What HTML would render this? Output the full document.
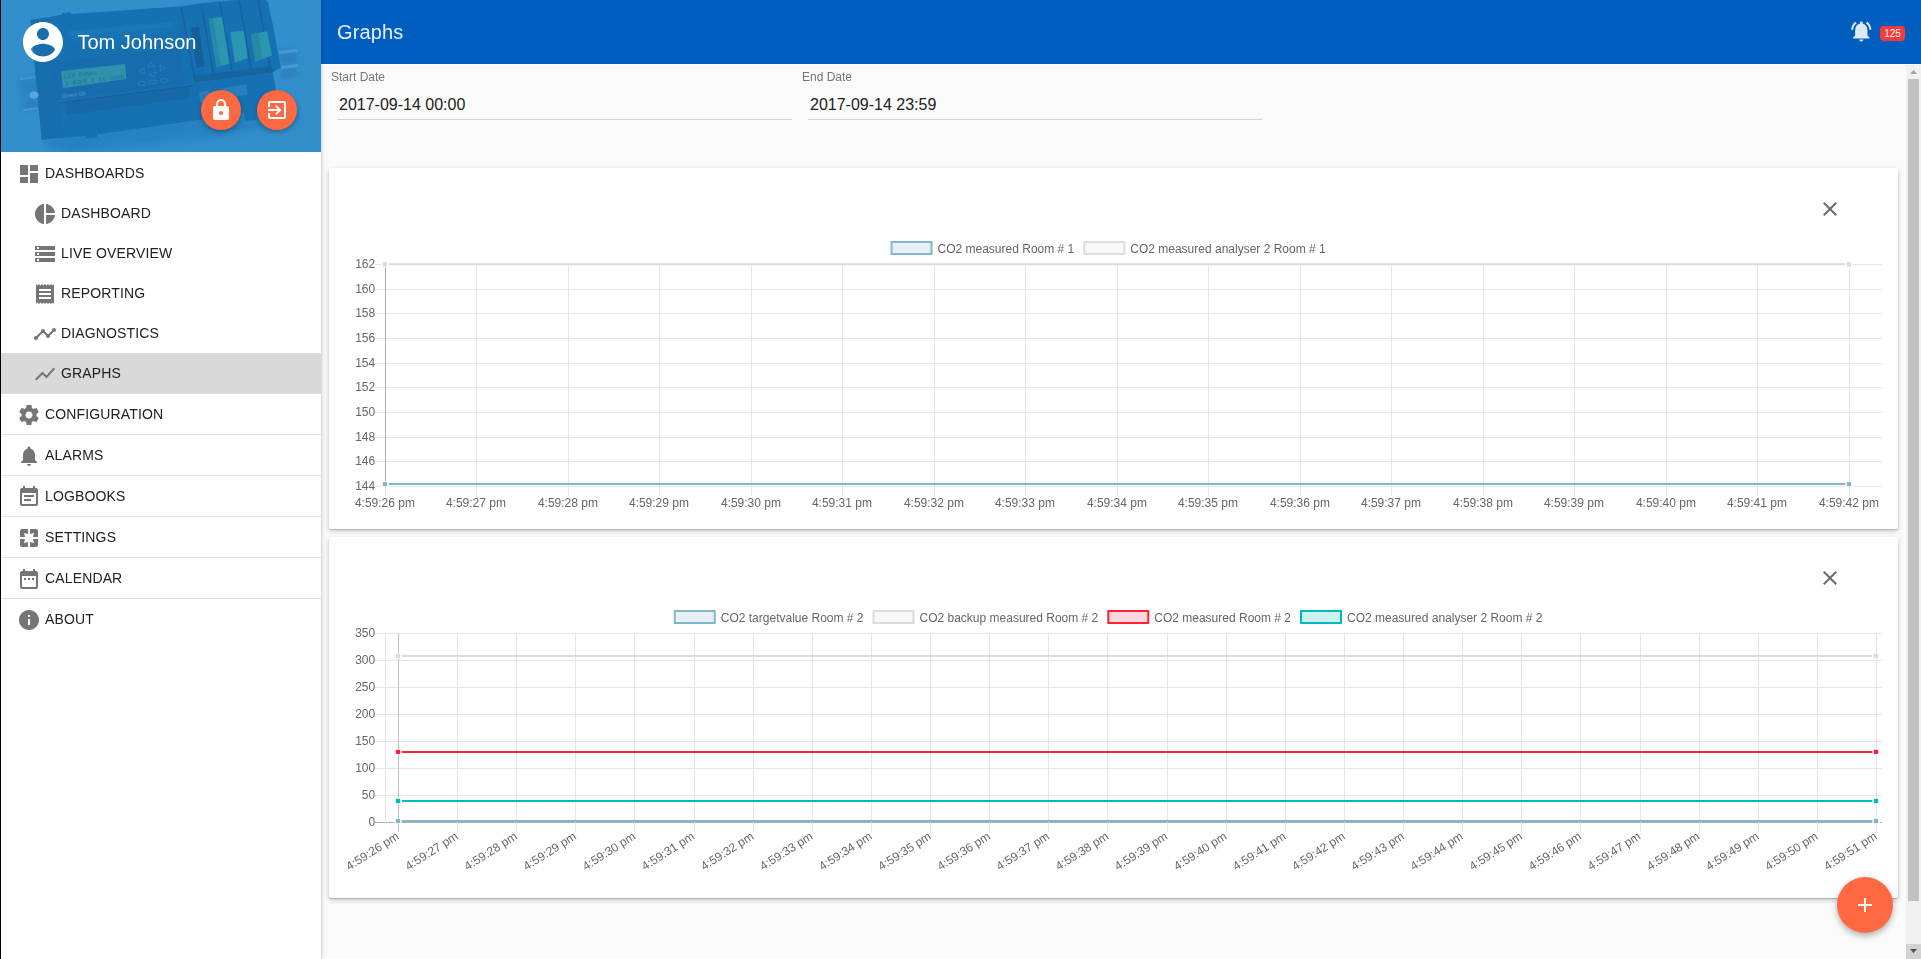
<!DOCTYPE html>
<html lang="en"><head><meta charset="utf-8"><title>Graphs</title>
<style>
*{box-sizing:border-box;margin:0;padding:0}
html,body{width:1921px;height:959px;overflow:hidden;background:#fafafa;font-family:"Liberation Sans",Arial,sans-serif;}
#strip{position:absolute;left:0;top:0;width:1px;height:959px;background:#000;z-index:50}
#side{position:absolute;left:1px;top:0;width:320px;height:959px;background:#fff;z-index:10;box-shadow:0 1px 5px 0 rgba(0,0,0,.2),0 2px 2px 0 rgba(0,0,0,.14),0 3px 1px -2px rgba(0,0,0,.12)}
#hdr{position:absolute;left:0;top:0;width:320px;height:152px;background:#338fcb;overflow:hidden}
#hdr svg.bg{position:absolute;left:0;top:0}
#avatar{position:absolute;left:18px;top:18px}
#uname{position:absolute;left:76.500px;top:30px;color:#fff;font-size:20px;line-height:24px;white-space:nowrap}
.fab{position:absolute;border-radius:50%;background:#ff6840;box-shadow:0 2px 5px rgba(0,0,0,.3)}
.fab svg{position:absolute}
.mi{position:absolute;left:0;width:320px;height:40px;font-size:14px;line-height:40px;color:#212121;white-space:nowrap;letter-spacing:0.14px}
.mi .ic{position:absolute;top:9px}
.mi span{position:absolute;top:0}
.mi.top .ic{left:16px} .mi.top span{left:44px}
.mi.sub .ic{left:32px} .mi.sub span{left:60px}
.mi.sel{background:#d9d9d9}
.sep{position:absolute;left:0;width:320px;height:1px;background:#e0e0e0}
#tb{position:absolute;left:321px;top:0;width:1600px;height:64px;background:#005fbe;z-index:5}
#tb h1{position:absolute;left:16px;top:18px;letter-spacing:0.12px;font-size:20px;font-weight:400;line-height:28px;color:#e8f0fa}
#bell{position:absolute;left:1527.900px;top:19.440px}
#badge{position:absolute;left:1559px;top:26px;width:25px;height:15px;border-radius:4px;background:#f93a3a;color:#fff;font-size:10px;line-height:15px;text-align:center;letter-spacing:0}
.lbl{position:absolute;top:70px;font-size:12px;line-height:14px;color:#757575}
.val{position:absolute;top:96px;font-size:16px;line-height:18px;color:#212121}
.ul{position:absolute;top:119px;height:1px;background:#d4d4d4}
.card{position:absolute;left:329px;width:1569px;height:361px;background:#fff;border-radius:2px;box-shadow:0 2px 5px 0 rgba(0,0,0,.22),0 1px 1px 0 rgba(0,0,0,.16)}
.card svg.ch{position:absolute;left:0;top:0}
.card .ic{position:absolute;left:1489px;top:29px}
#sb{position:absolute;left:1906px;top:64px;width:15px;height:895px;background:#f1f1f1}
#sb .th{position:absolute;left:2px;top:15px;width:11px;height:822px;background:#c1c1c1}
#sb .up,#sb .dn{position:absolute;left:0;width:15px;height:15px}
#sb .dn{bottom:0;background:#d2d2d2}
#side,#tb h1,.card,.lbl{will-change:transform}
svg text{font-family:"Liberation Sans",Arial,sans-serif}
svg text.mono{font-family:"Liberation Mono",monospace}
</style></head>
<body>
<div id="strip"></div>
<div id="side">
<div id="hdr"><svg class="bg" width="320" height="152" viewBox="1 0 320 152"><defs><filter id="b1" x="-10%" y="-10%" width="120%" height="120%"><feGaussianBlur stdDeviation="0.7"/></filter><filter id="b2" x="-30%" y="-30%" width="160%" height="160%"><feGaussianBlur stdDeviation="2.5"/></filter><filter id="b3" x="-30%" y="-60%" width="160%" height="220%"><feGaussianBlur stdDeviation="5"/></filter></defs><path d="M44 143 L150 128 L250 114 L292 108 L300 122 L210 138 L70 154 Z" fill="#2782c2" filter="url(#b3)"/><path d="M44 140 L200 119 L262 110 L264 118 L200 128 L50 147 Z" fill="#2580c0" filter="url(#b2)"/><path d="M17 77 L40 74 L44 110 L21 112 Z" fill="#2c87c6" filter="url(#b2)"/><path d="M22 84 L40 81 L41 90 L23 92 Z" fill="#2a80be" filter="url(#b2)"/><path d="M24 101 L42 99 L43 107 L25 109 Z" fill="#2a80be" filter="url(#b2)"/><path d="M20 78 L38 75.500 L38 77.500 L20 80 Z" fill="#4596cf" filter="url(#b1)"/><path d="M23 109 L42 107 L42 109 L23 111 Z" fill="#4596cf" filter="url(#b1)"/><path d="M277 48 L296 46 L298 77 L281 79 Z" fill="#2d88c6" filter="url(#b2)"/><path d="M279 51 L297 49 L297 52 L279 54 Z" fill="#4a9bd2" filter="url(#b1)"/><path d="M280 57 L297 55 L297 61 L281 63 Z" fill="#2a7fbb" filter="url(#b2)"/><path d="M281 66 L298 64 L298 67 L282 69 Z" fill="#4a9bd2" filter="url(#b1)"/><path d="M282 72 L298 70 L298 75 L282 77 Z" fill="#2a7fbb" filter="url(#b2)"/><g filter="url(#b1)"><path d="M30.5 20 L50 17 L62 14.500 L62 13 L71 12.200 L71 13.900 L179.600 6.400 L200 3.500 L218 1.500 L237 0 L266 0 L268 2 L272.700 24 L280.800 67.400 L272.700 72.500 L276 90 L277 108 L256.700 111 L256.700 120 L245.500 121 L243.800 112.500 L200 119.700 L97 134.500 L97 137.500 L85 139 L85 136 L41.800 139.800 Z" fill="#1771b2"/><path d="M30.500 20 L48 17.700 L64 136.500 L41.800 139.800 Z" fill="#166ead"/><path d="M50 17 L179.600 6.400 L180.500 12 L52 23 Z" fill="#1971b3"/><path d="M66 30 L178 20 L179 32 L68 43 Z" fill="#1973b4"/><path d="M70 31.500 L172 22.500 L172.500 27 L70.500 36 Z" fill="#1f78b8"/><path d="M50 62 L180 48 L184 84 L56 100 Z" fill="#156cac"/><path d="M64 104 L188 88 L190 98 L66 115 Z" fill="#1768a6"/><path d="M60 102 L192 85 L192.300 87 L60.300 104 Z" fill="#12639f"/><path d="M180.4 8 L182.20000000000002 8 L195.8 80 L194 80 Z" fill="#12639f"/><path d="M200.5 4.8 L202.3 4.8 L215.10000000000002 78.6 L213.3 78.6 Z" fill="#12639f"/><path d="M219 2.4 L220.8 2.4 L233.60000000000002 75.4 L231.8 75.4 Z" fill="#12639f"/><path d="M238.2 0.8 L240.0 0.8 L252.8 73 L251 73 Z" fill="#12639f"/><path d="M257.5 0 L259.3 0 L271.3 70.6 L269.5 70.6 Z" fill="#12639f"/><path d="M193 76 L272 66 L273 72.500 L194 82.500 Z" fill="#13659f"/><path d="M190.900 28 L199 27 L204.500 66.500 L196.500 68 Z" fill="#125f9b"/><path d="M199 92 L209 90.500 L210.500 101 L200.500 102.500 Z" fill="#2a7fba"/><path d="M222 88 L246 84.500 L247.500 95 L223.500 98.500 Z" fill="#2a7fba"/></g><path d="M61 71 L125 64 L126.500 79 L63 88 Z" fill="#2d92ab" filter="url(#b1)"/><g fill="#226f99" font-family="Liberation Mono, monospace" font-size="6.200" transform="translate(64.500,78.500) rotate(-6.500)" filter="url(#b1)"><text class="mono" x="0" y="0">LCD PANEL</text><text class="mono" x="0" y="7.300">2 ROWS X 16 CHAR</text></g><g fill="none" stroke="#2d83bf" stroke-width="0.800" filter="url(#b1)"><path d="M144 68 L139 71 L144.500 74 Z"/><path d="M151 62 L147.500 67 L155 66.500 Z"/><path d="M149.500 73.500 L156.500 72.500 L153.500 77.500 Z"/><path d="M160 65 L165.500 68 L160.500 71.500 Z"/><ellipse cx="142" cy="83.500" rx="4" ry="2"/><ellipse cx="153" cy="82" rx="4" ry="2"/><ellipse cx="164" cy="80.500" rx="4" ry="2"/></g><g filter="url(#b1)"><path d="M208.500 18.500 L222 16.900 L229.400 63.400 L216.500 67.400 Z" fill="#2a96b0"/><path d="M230.200 32.100 L243.800 30.500 L247.800 58.600 L235 62.600 Z" fill="#2a96b0"/><path d="M251 34.500 L267 31.300 L272 55.400 L255 61.800 Z" fill="#2a96b0"/><path d="M208.500 18.500 L213 18 L221 66 L216.500 67.400 Z" fill="#2589a6"/><path d="M251 34.500 L258 33 L262.500 59 L255 61.800 Z" fill="#2589a6"/></g><ellipse cx="34" cy="95" rx="4.500" ry="3.500" fill="#5ea6d6" filter="url(#b1)"/><text x="62" y="98" font-size="6" fill="#5a9fd0" transform="rotate(-6.500 62 98)" filter="url(#b1)" font-family="Liberation Sans,sans-serif">Direct 06</text></svg>
<div id="avatar"><svg class="ic" width="48" height="48" viewBox="0 0 24 24" style=""><path fill="#fff" d="M12 2C6.48 2 2 6.48 2 12s4.48 10 10 10 10-4.48 10-10S17.52 2 12 2zm0 3c1.66 0 3 1.34 3 3s-1.34 3-3 3-3-1.34-3-3 1.34-3 3-3zm0 14.2c-2.5 0-4.71-1.28-6-3.22.03-1.99 4-3.08 6-3.08 1.99 0 5.97 1.09 6 3.08-1.29 1.94-3.5 3.22-6 3.22z"/></svg></div>
<div id="uname">Tom Johnson</div>
<div class="fab" style="left:200px;top:90px;width:40px;height:40px"><svg class="ic" width="24" height="24" viewBox="0 0 24 24" style="left:8px;top:8px"><path fill="#fff" d="M18 8h-1V6c0-2.76-2.24-5-5-5S7 3.24 7 6v2H6c-1.1 0-2 .9-2 2v10c0 1.1.9 2 2 2h12c1.1 0 2-.9 2-2V10c0-1.1-.9-2-2-2zm-6 9c-1.1 0-2-.9-2-2s.9-2 2-2 2 .9 2 2-.9 2-2 2zm3.1-9H8.9V6c0-1.71 1.39-3.1 3.1-3.1 1.71 0 3.1 1.39 3.1 3.1v2z"/></svg></div>
<div class="fab" style="left:256px;top:90px;width:40px;height:40px"><svg class="ic" width="24" height="24" viewBox="0 0 24 24" style="left:8px;top:8px"><path fill="#fff" d="M10.09 15.59L11.5 17l5-5-5-5-1.41 1.41L12.67 11H3v2h9.67l-2.58 2.59zM19 3H5c-1.11 0-2 .9-2 2v4h2V5h14v14H5v-4H3v4c0 1.1.89 2 2 2h14c1.1 0 2-.9 2-2V5c0-1.1-.9-2-2-2z"/></svg></div>
</div>
<div class="mi top" style="top:153px"><svg class="ic" width="24" height="24" viewBox="0 0 24 24" style=""><path fill="#757575" d="M3 13h8V3H3v10zm0 8h8v-6H3v6zm10 0h8V11h-8v10zm0-18v6h8V3h-8z"/></svg><span>DASHBOARDS</span></div>
<div class="mi sub" style="top:193px"><svg class="ic" width="24" height="24" viewBox="0 0 24 24" style=""><path fill="#757575" d="M11 2v20c-5.07-.5-9-4.79-9-10s3.93-9.5 9-10zm2.03 0v8.99H22c-.47-4.74-4.24-8.52-8.97-8.99zm0 11.01V22c4.74-.47 8.5-4.25 8.97-8.99h-8.97z"/></svg><span>DASHBOARD</span></div>
<div class="mi sub" style="top:233px"><svg class="ic" width="24" height="24" viewBox="0 0 24 24" style=""><path fill="#757575" d="M2 20h20v-4H2v4zm2-3h2v2H4v-2zM2 4v4h20V4H2zm4 3H4V5h2v2zm-4 7h20v-4H2v4zm2-3h2v2H4v-2z"/></svg><span>LIVE OVERVIEW</span></div>
<div class="mi sub" style="top:273px"><svg class="ic" width="24" height="24" viewBox="0 0 24 24" style=""><path fill="#757575" d="M18 17H6v-2h12v2zm0-4H6v-2h12v2zm0-4H6V7h12v2zM3 22l1.5-1.5L6 22l1.5-1.5L9 22l1.5-1.5L12 22l1.5-1.5L15 22l1.5-1.5L18 22l1.5-1.5L21 22V2l-1.5 1.5L18 2l-1.5 1.5L15 2l-1.5 1.5L12 2l-1.5 1.5L9 2 7.5 3.5 6 2 4.5 3.5 3 2v20z"/></svg><span>REPORTING</span></div>
<div class="mi sub" style="top:313px"><svg class="ic" width="24" height="24" viewBox="0 0 24 24" style=""><path fill="#757575" d="M23 8c0 1.1-.9 2-2 2-.18 0-.35-.02-.51-.07l-3.56 3.55c.05.16.07.34.07.52 0 1.1-.9 2-2 2s-2-.9-2-2c0-.18.02-.36.07-.52l-2.55-2.55c-.16.05-.34.07-.52.07s-.36-.02-.52-.07l-4.55 4.56c.05.16.07.33.07.51 0 1.1-.9 2-2 2s-2-.9-2-2 .9-2 2-2c.18 0 .35.02.51.07l4.56-4.55C8.02 9.36 8 9.18 8 9c0-1.1.9-2 2-2s2 .9 2 2c0 .18-.02.36-.07.52l2.55 2.55c.16-.05.34-.07.52-.07s.36.02.52.07l3.55-3.56C19.02 8.35 19 8.18 19 8c0-1.1.9-2 2-2s2 .9 2 2z"/></svg><span>DIAGNOSTICS</span></div>
<div class="mi sub sel" style="top:353px"><svg class="ic" width="24" height="24" viewBox="0 0 24 24" style=""><path fill="#757575" d="M3.5 18.49l6-6.01 4 4L22 6.92l-1.41-1.41-7.09 7.97-4-4L2 16.99z"/></svg><span>GRAPHS</span></div>
<div class="sep" style="top:393px"></div>
<div class="mi top" style="top:394px"><svg class="ic" width="24" height="24" viewBox="0 0 24 24" style=""><path fill="#757575" d="M19.43 12.98c.04-.32.07-.64.07-.98s-.03-.66-.07-.98l2.11-1.65c.19-.15.24-.42.12-.64l-2-3.46c-.12-.22-.39-.3-.61-.22l-2.49 1c-.52-.4-1.08-.73-1.69-.98l-.38-2.65C14.46 2.18 14.25 2 14 2h-4c-.25 0-.46.18-.49.42l-.38 2.65c-.61.25-1.17.59-1.69.98l-2.49-1c-.23-.09-.49 0-.61.22l-2 3.46c-.13.22-.07.49.12.64l2.11 1.65c-.04.32-.07.65-.07.98s.03.66.07.98l-2.11 1.65c-.19.15-.24.42-.12.64l2 3.46c.12.22.39.3.61.22l2.49-1c.52.4 1.08.73 1.69.98l.38 2.65c.03.24.24.42.49.42h4c.25 0 .46-.18.49-.42l.38-2.65c.61-.25 1.17-.59 1.69-.98l2.49 1c.23.09.49 0 .61-.22l2-3.46c.12-.22.07-.49-.12-.64l-2.11-1.65zM12 15.5c-1.93 0-3.5-1.57-3.5-3.5s1.57-3.5 3.5-3.5 3.5 1.57 3.5 3.5-1.57 3.5-3.5 3.5z"/></svg><span>CONFIGURATION</span></div>
<div class="sep" style="top:434px"></div>
<div class="mi top" style="top:435px"><svg class="ic" width="24" height="24" viewBox="0 0 24 24" style=""><path fill="#757575" d="M12 22c1.1 0 2-.9 2-2h-4c0 1.1.89 2 2 2zm6-6v-5c0-3.07-1.64-5.64-4.5-6.32V4c0-.83-.67-1.5-1.5-1.5s-1.5.67-1.5 1.5v.68C7.63 5.36 6 7.92 6 11v5l-2 2v1h16v-1l-2-2z"/></svg><span>ALARMS</span></div>
<div class="sep" style="top:475px"></div>
<div class="mi top" style="top:476px"><svg class="ic" width="24" height="24" viewBox="0 0 24 24" style=""><path fill="#757575" d="M17 10H7v2h10v-2zm2-7h-1V1h-2v2H8V1H6v2H5c-1.11 0-1.99.9-1.99 2L3 19c0 1.1.89 2 2 2h14c1.1 0 2-.9 2-2V5c0-1.1-.9-2-2-2zm0 16H5V8h14v11zm-5-5H7v2h7v-2z"/></svg><span>LOGBOOKS</span></div>
<div class="sep" style="top:516px"></div>
<div class="mi top" style="top:517px"><svg class="ic" width="24" height="24" viewBox="0 0 24 24" style=""><path fill="#757575" d="M3 5v6h5L7 7l4 1V3H5c-1.1 0-2 .9-2 2zm5 8H3v6c0 1.1.9 2 2 2h6v-5l-4 1 1-4zm9 4l-4-1v5h6c1.1 0 2-.9 2-2v-6h-5l1 4zm2-14h-6v5l4-1-1 4h5V5c0-1.1-.9-2-2-2z"/></svg><span>SETTINGS</span></div>
<div class="sep" style="top:557px"></div>
<div class="mi top" style="top:558px"><svg class="ic" width="24" height="24" viewBox="0 0 24 24" style=""><path fill="#757575" d="M9 11H7v2h2v-2zm4 0h-2v2h2v-2zm4 0h-2v2h2v-2zm2-7h-1V2h-2v2H8V2H6v2H5c-1.11 0-1.99.9-1.99 2L3 20c0 1.1.89 2 2 2h14c1.1 0 2-.9 2-2V6c0-1.1-.9-2-2-2zm0 16H5V9h14v11z"/></svg><span>CALENDAR</span></div>
<div class="sep" style="top:598px"></div>
<div class="mi top" style="top:599px"><svg class="ic" width="24" height="24" viewBox="0 0 24 24" style=""><path fill="#757575" d="M12 2C6.48 2 2 6.48 2 12s4.48 10 10 10 10-4.48 10-10S17.52 2 12 2zm1 15h-2v-6h2v6zm0-8h-2V7h2v2z"/></svg><span>ABOUT</span></div>
</div>
<div id="tb"><h1>Graphs</h1>
<div id="bell"><svg class="ic" width="24.6" height="24.6" viewBox="0 0 24 24" style=""><path fill="#dbe8f6" d="M7.58 4.08L6.15 2.65C3.75 4.48 2.17 7.3 2.03 10.5h2c.15-2.650 1.51-4.97 3.55-6.42zm12.39 6.42h2c-.15-3.2-1.73-6.02-4.12-7.85l-1.42 1.430c2.02 1.45 3.39 3.77 3.54 6.42zM18 11c0-3.07-1.64-5.64-4.5-6.32V4c0-.83-.67-1.5-1.5-1.5s-1.5.67-1.5 1.5v.68C7.63 5.36 6 7.92 6 11v5l-2 2v1h16v-1l-2-2v-5zm-6 11c.14 0 .27-.01.4-.04.65-.14 1.18-.58 1.44-1.180.1-.24.15-.5.15-.78h-4c.01 1.1.9 2 2.010 2z"/></svg></div>
<div id="badge">125</div>
</div>
<div class="lbl" style="left:331px">Start Date</div>
<div class="val" style="left:339px">2017-09-14 00:00</div>
<div class="ul" style="left:337px;width:455px"></div>
<div class="lbl" style="left:802px">End Date</div>
<div class="val" style="left:810px">2017-09-14 23:59</div>
<div class="ul" style="left:808px;width:454px"></div>
<div class="card" style="top:168px"><svg class="ch" width="1569" height="361" viewBox="0 0 1569 361"><line x1="46" x2="1553" y1="96.5" y2="96.5" stroke="#e6e6e6" stroke-width="1"/><text x="46.19999999999999" y="100.10" font-size="12" fill="#666" text-anchor="end">162</text><line x1="46" x2="1553" y1="121.5" y2="121.5" stroke="#e6e6e6" stroke-width="1"/><text x="46.19999999999999" y="124.77" font-size="12" fill="#666" text-anchor="end">160</text><line x1="46" x2="1553" y1="145.5" y2="145.5" stroke="#e6e6e6" stroke-width="1"/><text x="46.19999999999999" y="149.43" font-size="12" fill="#666" text-anchor="end">158</text><line x1="46" x2="1553" y1="170.5" y2="170.5" stroke="#e6e6e6" stroke-width="1"/><text x="46.19999999999999" y="174.10" font-size="12" fill="#666" text-anchor="end">156</text><line x1="46" x2="1553" y1="195.5" y2="195.5" stroke="#e6e6e6" stroke-width="1"/><text x="46.19999999999999" y="198.77" font-size="12" fill="#666" text-anchor="end">154</text><line x1="46" x2="1553" y1="219.5" y2="219.5" stroke="#e6e6e6" stroke-width="1"/><text x="46.19999999999999" y="223.43" font-size="12" fill="#666" text-anchor="end">152</text><line x1="46" x2="1553" y1="244.5" y2="244.5" stroke="#e6e6e6" stroke-width="1"/><text x="46.19999999999999" y="248.10" font-size="12" fill="#666" text-anchor="end">150</text><line x1="46" x2="1553" y1="269.5" y2="269.5" stroke="#e6e6e6" stroke-width="1"/><text x="46.19999999999999" y="272.77" font-size="12" fill="#666" text-anchor="end">148</text><line x1="46" x2="1553" y1="293.5" y2="293.5" stroke="#e6e6e6" stroke-width="1"/><text x="46.19999999999999" y="297.43" font-size="12" fill="#666" text-anchor="end">146</text><line x1="46" x2="1553" y1="318.5" y2="318.5" stroke="#e6e6e6" stroke-width="1"/><text x="46.19999999999999" y="322.10" font-size="12" fill="#666" text-anchor="end">144</text><line x1="56.5" x2="56.5" y1="96.0" y2="319.0" stroke="#acacac" stroke-width="1"/><line x1="56.5" x2="56.5" y1="319.0" y2="328.0" stroke="#e6e6e6" stroke-width="1"/><text x="55.90" y="339" font-size="12" fill="#666" text-anchor="middle">4:59:26 pm</text><line x1="147.5" x2="147.5" y1="96.0" y2="328.0" stroke="#e6e6e6" stroke-width="1"/><text x="146.90" y="339" font-size="12" fill="#666" text-anchor="middle">4:59:27 pm</text><line x1="239.5" x2="239.5" y1="96.0" y2="328.0" stroke="#e6e6e6" stroke-width="1"/><text x="238.90" y="339" font-size="12" fill="#666" text-anchor="middle">4:59:28 pm</text><line x1="330.5" x2="330.5" y1="96.0" y2="328.0" stroke="#e6e6e6" stroke-width="1"/><text x="329.90" y="339" font-size="12" fill="#666" text-anchor="middle">4:59:29 pm</text><line x1="422.5" x2="422.5" y1="96.0" y2="328.0" stroke="#e6e6e6" stroke-width="1"/><text x="421.90" y="339" font-size="12" fill="#666" text-anchor="middle">4:59:30 pm</text><line x1="513.5" x2="513.5" y1="96.0" y2="328.0" stroke="#e6e6e6" stroke-width="1"/><text x="512.90" y="339" font-size="12" fill="#666" text-anchor="middle">4:59:31 pm</text><line x1="605.5" x2="605.5" y1="96.0" y2="328.0" stroke="#e6e6e6" stroke-width="1"/><text x="604.90" y="339" font-size="12" fill="#666" text-anchor="middle">4:59:32 pm</text><line x1="696.5" x2="696.5" y1="96.0" y2="328.0" stroke="#e6e6e6" stroke-width="1"/><text x="695.90" y="339" font-size="12" fill="#666" text-anchor="middle">4:59:33 pm</text><line x1="788.5" x2="788.5" y1="96.0" y2="328.0" stroke="#e6e6e6" stroke-width="1"/><text x="787.90" y="339" font-size="12" fill="#666" text-anchor="middle">4:59:34 pm</text><line x1="879.5" x2="879.5" y1="96.0" y2="328.0" stroke="#e6e6e6" stroke-width="1"/><text x="878.90" y="339" font-size="12" fill="#666" text-anchor="middle">4:59:35 pm</text><line x1="971.5" x2="971.5" y1="96.0" y2="328.0" stroke="#e6e6e6" stroke-width="1"/><text x="970.90" y="339" font-size="12" fill="#666" text-anchor="middle">4:59:36 pm</text><line x1="1062.5" x2="1062.5" y1="96.0" y2="328.0" stroke="#e6e6e6" stroke-width="1"/><text x="1061.90" y="339" font-size="12" fill="#666" text-anchor="middle">4:59:37 pm</text><line x1="1154.5" x2="1154.5" y1="96.0" y2="328.0" stroke="#e6e6e6" stroke-width="1"/><text x="1153.90" y="339" font-size="12" fill="#666" text-anchor="middle">4:59:38 pm</text><line x1="1245.5" x2="1245.5" y1="96.0" y2="328.0" stroke="#e6e6e6" stroke-width="1"/><text x="1244.90" y="339" font-size="12" fill="#666" text-anchor="middle">4:59:39 pm</text><line x1="1337.5" x2="1337.5" y1="96.0" y2="328.0" stroke="#e6e6e6" stroke-width="1"/><text x="1336.90" y="339" font-size="12" fill="#666" text-anchor="middle">4:59:40 pm</text><line x1="1428.5" x2="1428.5" y1="96.0" y2="328.0" stroke="#e6e6e6" stroke-width="1"/><text x="1427.90" y="339" font-size="12" fill="#666" text-anchor="middle">4:59:41 pm</text><line x1="1520.5" x2="1520.5" y1="96.0" y2="328.0" stroke="#e6e6e6" stroke-width="1"/><text x="1519.90" y="339" font-size="12" fill="#666" text-anchor="middle">4:59:42 pm</text><line x1="56" x2="1520" y1="96.19999999999999" y2="96.19999999999999" stroke="#dcdcdc" stroke-width="2"/><rect x="52.4" y="93.19999999999999" width="7.4" height="6" fill="#fff"/><rect x="53.8" y="93.99999999999999" width="4.4" height="4.4" fill="#dcdcdc" rx="0.8"/><rect x="1516.4" y="93.19999999999999" width="7.4" height="6" fill="#fff"/><rect x="1517.8" y="93.99999999999999" width="4.4" height="4.4" fill="#dcdcdc" rx="0.8"/><line x1="56" x2="1520" y1="316.1" y2="316.1" stroke="#84b6ca" stroke-width="2"/><rect x="52.4" y="313.1" width="7.4" height="6" fill="#fff"/><rect x="53.8" y="313.90000000000003" width="4.4" height="4.4" fill="#84b6ca" rx="0.8"/><rect x="1516.4" y="313.1" width="7.4" height="6" fill="#fff"/><rect x="1517.8" y="313.90000000000003" width="4.4" height="4.4" fill="#84b6ca" rx="0.8"/><rect x="562.52" y="74" width="40" height="12" fill="#e8f0f7" stroke="#84b6ca" stroke-width="2"/><text x="608.52" y="85.1" font-size="12" fill="#666">CO2 measured Room # 1</text><rect x="755.25" y="74" width="40" height="12" fill="#f8f8f8" stroke="#dcdcdc" stroke-width="2"/><text x="801.25" y="85.1" font-size="12" fill="#666">CO2 measured analyser 2 Room # 1</text></svg><svg class="ic" width="24" height="24" viewBox="0 0 24 24" style=""><path fill="#6b6b6b" d="M19 6.41L17.59 5 12 10.59 6.41 5 5 6.41 10.59 12 5 17.59 6.41 19 12 13.41 17.59 19 19 17.59 13.41 12z"/></svg></div>
<div class="card" style="top:537px"><svg class="ch" width="1569" height="361" viewBox="0 0 1569 361"><line x1="46" x2="1553" y1="96.5" y2="96.5" stroke="#e6e6e6" stroke-width="1"/><text x="46.19999999999999" y="100.10" font-size="12" fill="#666" text-anchor="end">350</text><line x1="46" x2="1553" y1="123.5" y2="123.5" stroke="#e6e6e6" stroke-width="1"/><text x="46.19999999999999" y="127.10" font-size="12" fill="#666" text-anchor="end">300</text><line x1="46" x2="1553" y1="150.5" y2="150.5" stroke="#e6e6e6" stroke-width="1"/><text x="46.19999999999999" y="154.10" font-size="12" fill="#666" text-anchor="end">250</text><line x1="46" x2="1553" y1="177.5" y2="177.5" stroke="#e6e6e6" stroke-width="1"/><text x="46.19999999999999" y="181.10" font-size="12" fill="#666" text-anchor="end">200</text><line x1="46" x2="1553" y1="204.5" y2="204.5" stroke="#e6e6e6" stroke-width="1"/><text x="46.19999999999999" y="208.10" font-size="12" fill="#666" text-anchor="end">150</text><line x1="46" x2="1553" y1="231.5" y2="231.5" stroke="#e6e6e6" stroke-width="1"/><text x="46.19999999999999" y="235.10" font-size="12" fill="#666" text-anchor="end">100</text><line x1="46" x2="1553" y1="258.5" y2="258.5" stroke="#e6e6e6" stroke-width="1"/><text x="46.19999999999999" y="262.10" font-size="12" fill="#666" text-anchor="end">50</text><line x1="46" x2="1553" y1="285.5" y2="285.5" stroke="#acacac" stroke-width="1"/><text x="46.19999999999999" y="289.10" font-size="12" fill="#666" text-anchor="end">0</text><line x1="56.5" x2="56.5" y1="96.0" y2="286.0" stroke="#e6e6e6" stroke-width="1"/><line x1="69.5" x2="69.5" y1="96.0" y2="295.0" stroke="#bfbfbf" stroke-width="1"/><text transform="translate(70.90,301.4) rotate(-32.5)" font-size="12" fill="#666" text-anchor="end">4:59:26 pm</text><line x1="128.5" x2="128.5" y1="96.0" y2="295.0" stroke="#e6e6e6" stroke-width="1"/><text transform="translate(130.02,301.4) rotate(-32.5)" font-size="12" fill="#666" text-anchor="end">4:59:27 pm</text><line x1="187.5" x2="187.5" y1="96.0" y2="295.0" stroke="#e6e6e6" stroke-width="1"/><text transform="translate(189.14,301.4) rotate(-32.5)" font-size="12" fill="#666" text-anchor="end">4:59:28 pm</text><line x1="246.5" x2="246.5" y1="96.0" y2="295.0" stroke="#e6e6e6" stroke-width="1"/><text transform="translate(248.26,301.4) rotate(-32.5)" font-size="12" fill="#666" text-anchor="end">4:59:29 pm</text><line x1="305.5" x2="305.5" y1="96.0" y2="295.0" stroke="#e6e6e6" stroke-width="1"/><text transform="translate(307.38,301.4) rotate(-32.5)" font-size="12" fill="#666" text-anchor="end">4:59:30 pm</text><line x1="365.5" x2="365.5" y1="96.0" y2="295.0" stroke="#e6e6e6" stroke-width="1"/><text transform="translate(366.50,301.4) rotate(-32.5)" font-size="12" fill="#666" text-anchor="end">4:59:31 pm</text><line x1="424.5" x2="424.5" y1="96.0" y2="295.0" stroke="#e6e6e6" stroke-width="1"/><text transform="translate(425.62,301.4) rotate(-32.5)" font-size="12" fill="#666" text-anchor="end">4:59:32 pm</text><line x1="483.5" x2="483.5" y1="96.0" y2="295.0" stroke="#e6e6e6" stroke-width="1"/><text transform="translate(484.74,301.4) rotate(-32.5)" font-size="12" fill="#666" text-anchor="end">4:59:33 pm</text><line x1="542.5" x2="542.5" y1="96.0" y2="295.0" stroke="#e6e6e6" stroke-width="1"/><text transform="translate(543.86,301.4) rotate(-32.5)" font-size="12" fill="#666" text-anchor="end">4:59:34 pm</text><line x1="601.5" x2="601.5" y1="96.0" y2="295.0" stroke="#e6e6e6" stroke-width="1"/><text transform="translate(602.98,301.4) rotate(-32.5)" font-size="12" fill="#666" text-anchor="end">4:59:35 pm</text><line x1="660.5" x2="660.5" y1="96.0" y2="295.0" stroke="#e6e6e6" stroke-width="1"/><text transform="translate(662.10,301.4) rotate(-32.5)" font-size="12" fill="#666" text-anchor="end">4:59:36 pm</text><line x1="719.5" x2="719.5" y1="96.0" y2="295.0" stroke="#e6e6e6" stroke-width="1"/><text transform="translate(721.22,301.4) rotate(-32.5)" font-size="12" fill="#666" text-anchor="end">4:59:37 pm</text><line x1="778.5" x2="778.5" y1="96.0" y2="295.0" stroke="#e6e6e6" stroke-width="1"/><text transform="translate(780.34,301.4) rotate(-32.5)" font-size="12" fill="#666" text-anchor="end">4:59:38 pm</text><line x1="838.5" x2="838.5" y1="96.0" y2="295.0" stroke="#e6e6e6" stroke-width="1"/><text transform="translate(839.46,301.4) rotate(-32.5)" font-size="12" fill="#666" text-anchor="end">4:59:39 pm</text><line x1="897.5" x2="897.5" y1="96.0" y2="295.0" stroke="#e6e6e6" stroke-width="1"/><text transform="translate(898.58,301.4) rotate(-32.5)" font-size="12" fill="#666" text-anchor="end">4:59:40 pm</text><line x1="956.5" x2="956.5" y1="96.0" y2="295.0" stroke="#e6e6e6" stroke-width="1"/><text transform="translate(957.70,301.4) rotate(-32.5)" font-size="12" fill="#666" text-anchor="end">4:59:41 pm</text><line x1="1015.5" x2="1015.5" y1="96.0" y2="295.0" stroke="#e6e6e6" stroke-width="1"/><text transform="translate(1016.82,301.4) rotate(-32.5)" font-size="12" fill="#666" text-anchor="end">4:59:42 pm</text><line x1="1074.5" x2="1074.5" y1="96.0" y2="295.0" stroke="#e6e6e6" stroke-width="1"/><text transform="translate(1075.94,301.4) rotate(-32.5)" font-size="12" fill="#666" text-anchor="end">4:59:43 pm</text><line x1="1133.5" x2="1133.5" y1="96.0" y2="295.0" stroke="#e6e6e6" stroke-width="1"/><text transform="translate(1135.06,301.4) rotate(-32.5)" font-size="12" fill="#666" text-anchor="end">4:59:44 pm</text><line x1="1192.5" x2="1192.5" y1="96.0" y2="295.0" stroke="#e6e6e6" stroke-width="1"/><text transform="translate(1194.18,301.4) rotate(-32.5)" font-size="12" fill="#666" text-anchor="end">4:59:45 pm</text><line x1="1251.5" x2="1251.5" y1="96.0" y2="295.0" stroke="#e6e6e6" stroke-width="1"/><text transform="translate(1253.30,301.4) rotate(-32.5)" font-size="12" fill="#666" text-anchor="end">4:59:46 pm</text><line x1="1311.5" x2="1311.5" y1="96.0" y2="295.0" stroke="#e6e6e6" stroke-width="1"/><text transform="translate(1312.42,301.4) rotate(-32.5)" font-size="12" fill="#666" text-anchor="end">4:59:47 pm</text><line x1="1370.5" x2="1370.5" y1="96.0" y2="295.0" stroke="#e6e6e6" stroke-width="1"/><text transform="translate(1371.54,301.4) rotate(-32.5)" font-size="12" fill="#666" text-anchor="end">4:59:48 pm</text><line x1="1429.5" x2="1429.5" y1="96.0" y2="295.0" stroke="#e6e6e6" stroke-width="1"/><text transform="translate(1430.66,301.4) rotate(-32.5)" font-size="12" fill="#666" text-anchor="end">4:59:49 pm</text><line x1="1488.5" x2="1488.5" y1="96.0" y2="295.0" stroke="#e6e6e6" stroke-width="1"/><text transform="translate(1489.78,301.4) rotate(-32.5)" font-size="12" fill="#666" text-anchor="end">4:59:50 pm</text><line x1="1547.5" x2="1547.5" y1="96.0" y2="295.0" stroke="#e6e6e6" stroke-width="1"/><text transform="translate(1548.90,301.4) rotate(-32.5)" font-size="12" fill="#666" text-anchor="end">4:59:51 pm</text><line x1="69" x2="1547" y1="119" y2="119" stroke="#dcdcdc" stroke-width="2"/><rect x="65.4" y="116" width="7.4" height="6" fill="#fff"/><rect x="66.8" y="116.8" width="4.4" height="4.4" fill="#dcdcdc" rx="0.8"/><rect x="1543.4" y="116" width="7.4" height="6" fill="#fff"/><rect x="1544.8" y="116.8" width="4.4" height="4.4" fill="#dcdcdc" rx="0.8"/><line x1="69" x2="1547" y1="214.89999999999998" y2="214.89999999999998" stroke="#ff2138" stroke-width="2"/><rect x="65.4" y="211.89999999999998" width="7.4" height="6" fill="#fff"/><rect x="66.8" y="212.7" width="4.4" height="4.4" fill="#ff2138" rx="0.8"/><rect x="1543.4" y="211.89999999999998" width="7.4" height="6" fill="#fff"/><rect x="1544.8" y="212.7" width="4.4" height="4.4" fill="#ff2138" rx="0.8"/><line x1="69" x2="1547" y1="264" y2="264" stroke="#00bcb8" stroke-width="2"/><rect x="65.4" y="261" width="7.4" height="6" fill="#fff"/><rect x="66.8" y="261.8" width="4.4" height="4.4" fill="#00bcb8" rx="0.8"/><rect x="1543.4" y="261" width="7.4" height="6" fill="#fff"/><rect x="1544.8" y="261.8" width="4.4" height="4.4" fill="#00bcb8" rx="0.8"/><line x1="69" x2="1547" y1="284.04999999999995" y2="284.04999999999995" stroke="#84b6ca" stroke-width="2.1"/><rect x="65.4" y="281.04999999999995" width="7.4" height="6" fill="#fff"/><rect x="66.8" y="281.84999999999997" width="4.4" height="4.4" fill="#84b6ca" rx="0.8"/><rect x="1543.4" y="281.04999999999995" width="7.4" height="6" fill="#fff"/><rect x="1544.8" y="281.84999999999997" width="4.4" height="4.4" fill="#84b6ca" rx="0.8"/><rect x="345.77" y="74" width="40" height="12" fill="#e8f0f7" stroke="#84b6ca" stroke-width="2"/><text x="391.77" y="85.1" font-size="12" fill="#666">CO2 targetvalue Room # 2</text><rect x="544.51" y="74" width="40" height="12" fill="#f8f8f8" stroke="#dcdcdc" stroke-width="2"/><text x="590.51" y="85.1" font-size="12" fill="#666">CO2 backup measured Room # 2</text><rect x="779.27" y="74" width="40" height="12" fill="#ffd7dc" stroke="#ff2138" stroke-width="2"/><text x="825.27" y="85.1" font-size="12" fill="#666">CO2 measured Room # 2</text><rect x="972.00" y="74" width="40" height="12" fill="#ccf2f1" stroke="#00bcb8" stroke-width="2"/><text x="1018.00" y="85.1" font-size="12" fill="#666">CO2 measured analyser 2 Room # 2</text></svg><svg class="ic" width="24" height="24" viewBox="0 0 24 24" style=""><path fill="#6b6b6b" d="M19 6.41L17.59 5 12 10.59 6.41 5 5 6.41 10.59 12 5 17.59 6.41 19 12 13.41 17.59 19 19 17.59 13.41 12z"/></svg></div>
<div class="fab" style="left:1837px;top:877px;width:56px;height:56px;z-index:20;box-shadow:0 3px 6px rgba(0,0,0,.3)"><svg class="ic" width="24" height="24" viewBox="0 0 24 24" style="left:16px;top:16px"><path fill="#fff" d="M19 13h-6v6h-2v-6H5v-2h6V5h2v6h6v2z"/></svg></div>
<div style="position:absolute;left:321px;top:64px;width:1600px;height:1px;background:#fff;z-index:4"></div>
<div id="sb"><div class="up"><svg width="15" height="15"><path d="M4 10 L7.500 6 L11 10 Z" fill="#a3a3a3"/></svg></div><div class="th"></div><div class="dn"><svg width="15" height="15"><path d="M4 5 L11 5 L7.500 9 Z" fill="#505050"/></svg></div></div>
</body></html>
